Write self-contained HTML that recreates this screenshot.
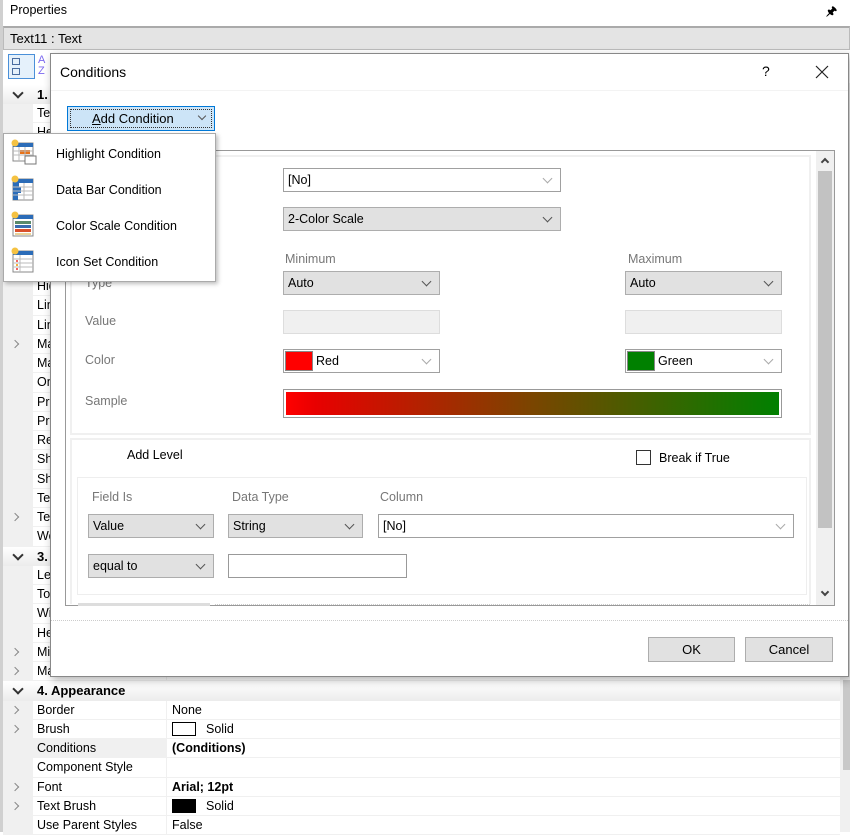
<!DOCTYPE html>
<html><head><meta charset="utf-8">
<style>
*{box-sizing:border-box;margin:0;padding:0}
body{width:850px;height:832px;overflow:hidden;background:#fff;font-family:"Liberation Sans",Arial,sans-serif;font-size:12.5px;color:#000;position:relative}
.a{position:absolute}
.grid{position:absolute;left:3px;top:84.6px;width:837px}
.r{height:19.26px;display:flex;line-height:19px;white-space:nowrap}
.r .g{width:30px;background:#f0f0f0;position:relative}
.r .n{width:134px;padding-left:4px;border-bottom:1px solid #f0f0f0;border-right:1px solid #f0f0f0;overflow:hidden}
.r .v{flex:1;padding-left:5px;border-bottom:1px solid #f0f0f0}
.r.s{background:linear-gradient(#fff,#ececec)}
.r.s .g{background:transparent}
.r.s .n{font-weight:bold;border:none;font-size:13px;width:400px}
.dn:after{content:"";position:absolute;left:11px;top:4px;width:6px;height:6px;border-right:2px solid #333;border-bottom:2px solid #333;transform:rotate(45deg)}
.rt:after{content:"";position:absolute;left:9px;top:6px;width:5px;height:5px;border-right:1px solid #888;border-bottom:1px solid #888;transform:rotate(-45deg)}
.cb{position:absolute;height:24px;border:1px solid #adadad;background:#e1e1e1;padding-left:4px;line-height:22px;font-size:12.5px}
.cb.w{background:#fff;border-color:#a0a0a0}
.cb:after{content:"";position:absolute;right:9px;top:6px;width:6px;height:6px;border-right:1px solid #555;border-bottom:1px solid #555;transform:rotate(45deg)}
.cb.w:after{border-color:#aaa}
.lb{position:absolute;color:#777;font-size:12.5px}
.tb{position:absolute;height:24px;border:1px solid #ddd;background:#f0f0f0}
.btn{position:absolute;height:25px;border:1px solid #adadad;background:#e1e1e1;text-align:center;line-height:23px;font-size:13px}
.mi{position:absolute;left:52px;font-size:12.5px}
.ic{position:absolute;left:6px;width:28px;height:28px}
</style></head><body>
<div class="a" style="left:0;top:0;width:3px;height:832px;background:#d0d0d0"></div>
<div class="a" style="left:10px;top:3px;font-size:12.5px">Properties</div>
<div class="a" style="left:826px;top:2px;font-size:12px;font-weight:bold">&#x1F588;</div>
<div class="a" style="left:3px;top:26px;width:847px;height:24px;background:#e4e4e4;border:1px solid #bbb;border-top:2px solid #aaa;padding-left:6px;line-height:21px;font-size:13px">Text11 : Text</div>
<div class="a" style="left:8px;top:54px;width:27px;height:25px;border:1px solid #4a90d9;background:#e5f1fb"></div>
<div class="a" style="left:12px;top:58px;width:8px;height:7px;border:1px solid #4a6da0"></div>
<div class="a" style="left:12px;top:68px;width:8px;height:7px;border:1px solid #4a6da0"></div>
<div class="a" style="left:38px;top:55px;color:#7b68ee;font-size:11px;line-height:11px">A<br>Z</div>
<div class="a" style="left:840px;top:83px;width:10px;height:749px;background:#f0f0f0"></div>
<div class="a" style="left:843px;top:680px;width:7px;height:90px;background:#c8c8c8"></div>

<div class="grid">
<div class="r s"><div class="g dn"></div><div class="n">1. Text</div></div>
<div class="r"><div class="g"></div><div class="n">Text</div><div class="v"></div></div>
<div class="r"><div class="g"></div><div class="n">Height</div><div class="v"></div></div>
<div class="r"><div class="g"></div><div class="n">H</div><div class="v"></div></div>
<div class="r"><div class="g"></div><div class="n">H</div><div class="v"></div></div>
<div class="r"><div class="g"></div><div class="n">H</div><div class="v"></div></div>
<div class="r"><div class="g"></div><div class="n">H</div><div class="v"></div></div>
<div class="r"><div class="g"></div><div class="n">H</div><div class="v"></div></div>
<div class="r"><div class="g"></div><div class="n">H</div><div class="v"></div></div>
<div class="r"><div class="g"></div><div class="n">H</div><div class="v"></div></div>
<div class="r"><div class="g"></div><div class="n">Hide</div><div class="v"></div></div>
<div class="r"><div class="g"></div><div class="n">Lines</div><div class="v"></div></div>
<div class="r"><div class="g"></div><div class="n">Lines</div><div class="v"></div></div>
<div class="r"><div class="g rt"></div><div class="n">Margins</div><div class="v"></div></div>
<div class="r"><div class="g"></div><div class="n">Max</div><div class="v"></div></div>
<div class="r"><div class="g"></div><div class="n">Only</div><div class="v"></div></div>
<div class="r"><div class="g"></div><div class="n">Print</div><div class="v"></div></div>
<div class="r"><div class="g"></div><div class="n">Print</div><div class="v"></div></div>
<div class="r"><div class="g"></div><div class="n">Render</div><div class="v"></div></div>
<div class="r"><div class="g"></div><div class="n">Shrink</div><div class="v"></div></div>
<div class="r"><div class="g"></div><div class="n">Shift</div><div class="v"></div></div>
<div class="r"><div class="g"></div><div class="n">Text</div><div class="v"></div></div>
<div class="r"><div class="g rt"></div><div class="n">Text</div><div class="v"></div></div>
<div class="r"><div class="g"></div><div class="n">Word</div><div class="v"></div></div>
<div class="r s"><div class="g dn"></div><div class="n">3. Position</div></div>
<div class="r"><div class="g"></div><div class="n">Left</div><div class="v"></div></div>
<div class="r"><div class="g"></div><div class="n">Top</div><div class="v"></div></div>
<div class="r"><div class="g"></div><div class="n">Width</div><div class="v"></div></div>
<div class="r"><div class="g"></div><div class="n">Height</div><div class="v"></div></div>
<div class="r"><div class="g rt"></div><div class="n">Min</div><div class="v"></div></div>
<div class="r"><div class="g rt"></div><div class="n">Max Size</div><div class="v">0;0</div></div>
<div class="r s"><div class="g dn"></div><div class="n">4. Appearance</div></div>
<div class="r"><div class="g rt"></div><div class="n">Border</div><div class="v">None</div></div>
<div class="r"><div class="g rt"></div><div class="n">Brush</div><div class="v"><span style="display:inline-block;width:24px;height:14px;border:1px solid #000;vertical-align:-3px;margin-right:10px"></span>Solid</div></div>
<div class="r"><div class="g"></div><div class="n" style="background:#f0f0f0">Conditions</div><div class="v" style="font-weight:bold">(Conditions)</div></div>
<div class="r"><div class="g"></div><div class="n">Component Style</div><div class="v"></div></div>
<div class="r"><div class="g rt"></div><div class="n">Font</div><div class="v" style="font-weight:bold">Arial; 12pt</div></div>
<div class="r"><div class="g rt"></div><div class="n">Text Brush</div><div class="v"><span style="display:inline-block;width:24px;height:14px;background:#000;vertical-align:-3px;margin-right:10px"></span>Solid</div></div>
<div class="r"><div class="g"></div><div class="n">Use Parent Styles</div><div class="v">False</div></div>
</div>

<!-- dialog -->
<div class="a" style="left:50px;top:53px;width:799px;height:624px;background:#fff;border:1px solid #888;box-shadow:2px 3px 8px rgba(0,0,0,.3)">
<div class="a" style="left:9px;top:10px;font-size:14px">Conditions</div>
<div class="a" style="left:711px;top:9px;font-size:14px">?</div>
<svg class="a" style="left:764px;top:11px" width="14" height="14" viewBox="0 0 14 14"><path d="M1 1L13 13M13 1L1 13" stroke="#222" stroke-width="1.2"/></svg>
<div class="a" style="left:0;top:36px;width:797px;height:1px;background:#f3f3f3"></div>
</div>
<div class="a" style="left:67px;top:106px;width:148px;height:25px;border:1px solid #0078d7;background:#cce4f7"><div class="a" style="left:2px;top:2px;right:2px;bottom:2px;border:1px dotted #333"></div><div class="a" style="left:24px;top:4px;font-size:13px"><u>A</u>dd Condition</div><div class="a" style="right:9px;top:6px;width:6px;height:6px;border-right:1px solid #555;border-bottom:1px solid #555;transform:rotate(45deg)"></div></div>

<div class="a" style="left:65px;top:150px;width:770px;height:456px;border:1px solid #999"></div>
<div class="a" style="left:816px;top:151px;width:18px;height:454px;background:#f0f0f0"></div>
<div class="a" style="left:818px;top:171px;width:14px;height:357px;background:#c2c2c2"></div>
<div class="a" style="left:822px;top:159px;width:6px;height:6px;border-left:2px solid #444;border-top:2px solid #444;transform:rotate(45deg)"></div>
<div class="a" style="left:822px;top:589px;width:6px;height:6px;border-right:2px solid #444;border-bottom:2px solid #444;transform:rotate(45deg)"></div>
<div class="a" style="left:70px;top:155px;width:741px;height:280px;border:2px solid #f0f0f0"></div>

<div class="cb w" style="left:283px;top:168px;width:278px">[No]</div>
<div class="cb" style="left:283px;top:207px;width:278px">2-Color Scale</div>
<div class="lb" style="left:285px;top:252px">Minimum</div>
<div class="lb" style="left:628px;top:252px">Maximum</div>
<div class="lb" style="left:85px;top:276px">Type</div>
<div class="cb" style="left:283px;top:271px;width:157px">Auto</div>
<div class="cb" style="left:625px;top:271px;width:157px">Auto</div>
<div class="lb" style="left:85px;top:314px">Value</div>
<div class="tb" style="left:283px;top:310px;width:157px"></div>
<div class="tb" style="left:625px;top:310px;width:157px"></div>
<div class="lb" style="left:85px;top:353px">Color</div>
<div class="cb w" style="left:283px;top:349px;width:157px;padding-left:32px"><span class="a" style="left:1px;top:1px;width:28px;height:20px;background:#f00;border:1px solid #888"></span>Red</div>
<div class="cb w" style="left:625px;top:349px;width:157px;padding-left:32px"><span class="a" style="left:1px;top:1px;width:28px;height:20px;background:#008000;border:1px solid #888"></span>Green</div>
<div class="lb" style="left:85px;top:394px">Sample</div>
<div class="a" style="left:283px;top:389px;width:499px;height:29px;border:1px solid #999;padding:2px"><div style="width:100%;height:100%;background:linear-gradient(90deg,#f00 0%,#e80000 6%,#7a4500 50%,#008000 100%)"></div></div>

<div class="a" style="left:70px;top:438px;width:741px;height:166px;border:2px solid #f0f0f0;border-bottom:none"></div>
<div class="a" style="left:127px;top:448px;font-size:12.5px">Add Level</div>
<div class="a" style="left:636px;top:450px;width:15px;height:15px;border:1px solid #333;background:#fff"></div>
<div class="a" style="left:659px;top:451px;font-size:12.5px">Break if True</div>
<div class="a" style="left:77px;top:477px;width:730px;height:118px;border:1px solid #eee"></div>
<div class="lb" style="left:92px;top:490px">Field Is</div>
<div class="lb" style="left:232px;top:490px">Data Type</div>
<div class="lb" style="left:380px;top:490px">Column</div>
<div class="cb" style="left:88px;top:514px;width:126px">Value</div>
<div class="cb" style="left:228px;top:514px;width:135px">String</div>
<div class="cb w" style="left:378px;top:514px;width:416px">[No]</div>
<div class="cb" style="left:88px;top:554px;width:126px">equal to</div>
<div class="a" style="left:228px;top:554px;width:179px;height:24px;border:1px solid #999;background:#fff"></div>
<div class="a" style="left:78px;top:603px;width:132px;height:3px;background:#ddd"></div>
<div class="a" style="left:215px;top:604px;width:595px;border-top:1px dotted #ccc"></div>

<div class="a" style="left:51px;top:620px;width:797px;border-top:1px dotted #ccc"></div>
<div class="btn" style="left:648px;top:637px;width:87px">OK</div>
<div class="btn" style="left:745px;top:637px;width:88px">Cancel</div>

<!-- dropdown -->
<div class="a" style="left:3px;top:133px;width:213px;height:149px;background:#fff;border:1px solid #aaa;box-shadow:2px 2px 4px rgba(0,0,0,.25)">
<svg class="ic" style="top:5px" viewBox="0 0 28 28"><rect x="3" y="4" width="20" height="18" fill="#fff" stroke="#888"/><rect x="3" y="4" width="20" height="4" fill="#2b6cb8"/><rect x="10" y="11" width="10" height="4" fill="#e8731a"/><path d="M3 12h20M3 16h20M9 8v14M15 8v14" stroke="#bbb"/><rect x="15" y="17" width="11" height="8" fill="#fff" stroke="#777"/><circle cx="5" cy="4" r="3.5" fill="#f5c242"/></svg>
<div class="mi" style="top:13px">Highlight Condition</div>
<svg class="ic" style="top:41px" viewBox="0 0 28 28"><rect x="3" y="4" width="20" height="21" fill="#fff" stroke="#888"/><rect x="3" y="4" width="20" height="4" fill="#2b6cb8"/><path d="M3 8h6v4h2v6h-3v7H3z" fill="#2b6cb8"/><path d="M3 12h20M3 16h20M3 20h20M14 8v17" stroke="#bbb"/><circle cx="5" cy="4" r="3.5" fill="#f5c242"/></svg>
<div class="mi" style="top:49px">Data Bar Condition</div>
<svg class="ic" style="top:77px" viewBox="0 0 28 28"><rect x="3" y="4" width="20" height="21" fill="#fff" stroke="#888"/><rect x="3" y="4" width="20" height="4" fill="#2b6cb8"/><rect x="5" y="10" width="16" height="3" fill="#5a8a6a"/><rect x="5" y="14" width="16" height="3" fill="#3a6cb0"/><rect x="5" y="18" width="16" height="3" fill="#d9502a"/><rect x="5" y="22" width="16" height="2" fill="#e8d29a"/><circle cx="5" cy="4" r="3.5" fill="#f5c242"/></svg>
<div class="mi" style="top:85px">Color Scale Condition</div>
<svg class="ic" style="top:113px" viewBox="0 0 28 28"><rect x="3" y="4" width="20" height="21" fill="#fff" stroke="#888"/><rect x="3" y="4" width="20" height="4" fill="#2b6cb8"/><path d="M3 12h20M3 16h20M3 20h20M10 8v17" stroke="#bbb"/><circle cx="7" cy="14" r="1" fill="#e33"/><circle cx="7" cy="18" r="1" fill="#e90"/><circle cx="7" cy="22" r="1" fill="#e33"/><circle cx="5" cy="4" r="3.5" fill="#f5c242"/></svg>
<div class="mi" style="top:121px">Icon Set Condition</div>
</div>
</body></html>
